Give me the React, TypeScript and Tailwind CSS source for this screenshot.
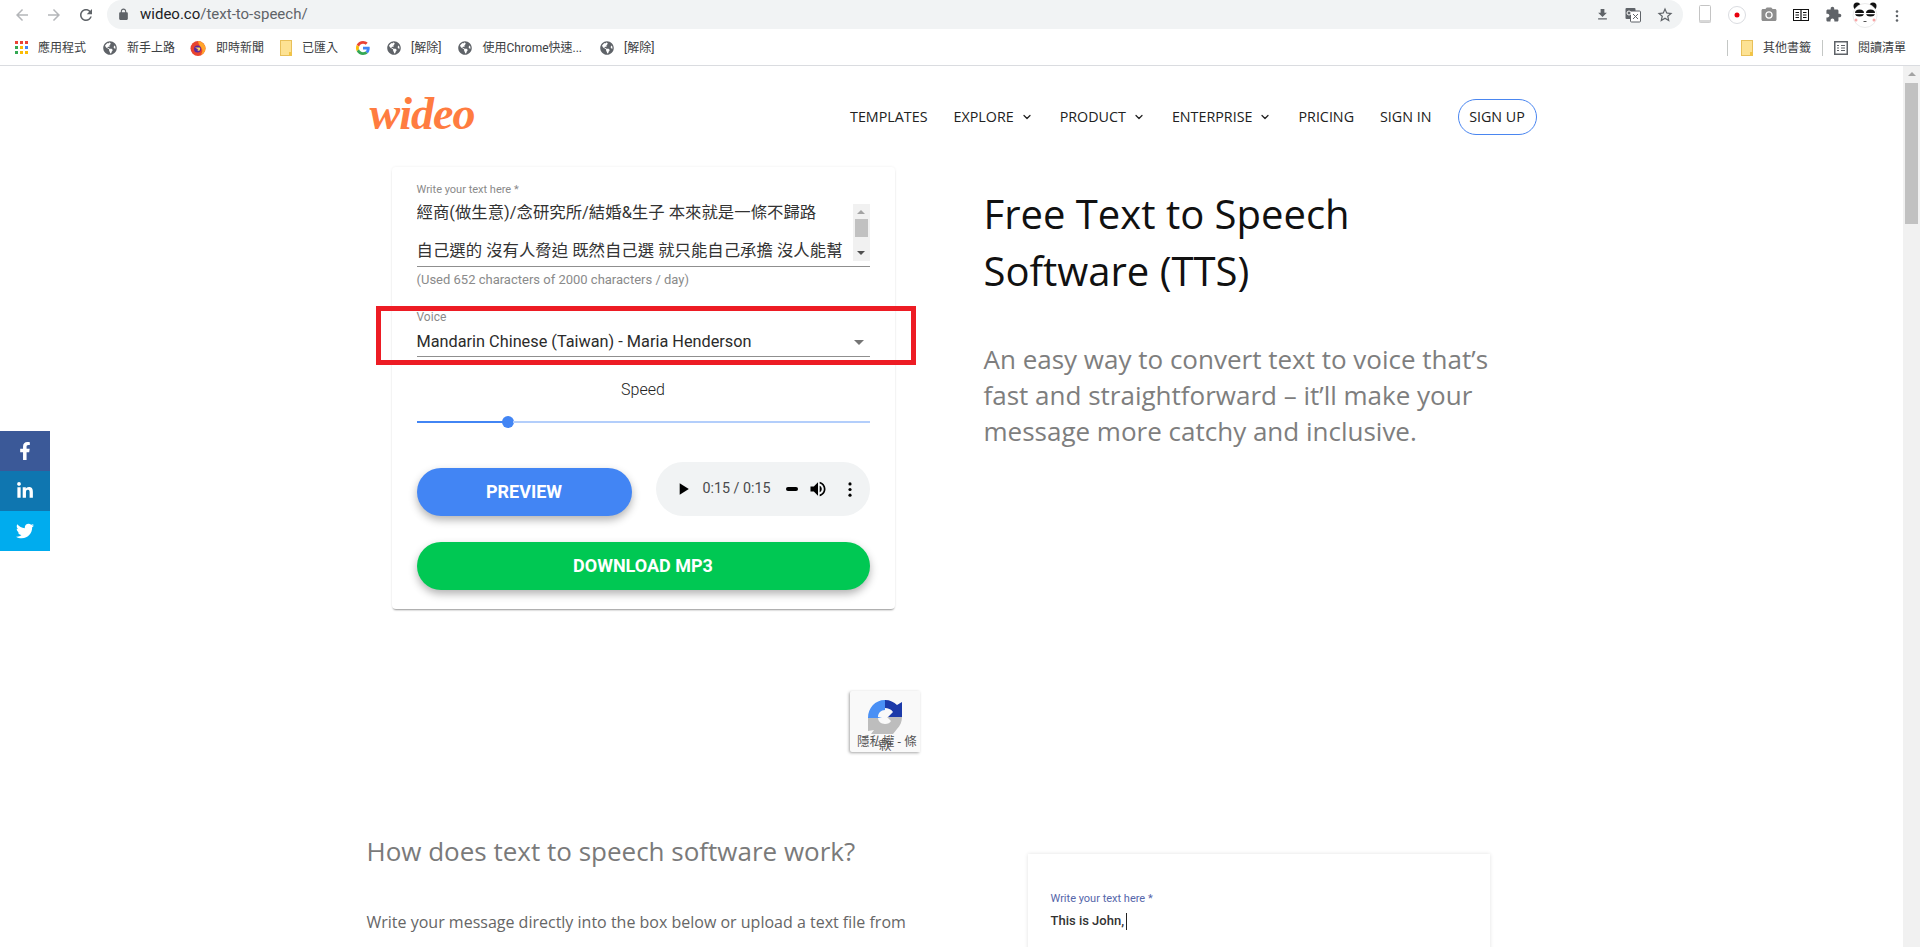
import { ChevronDown } from "lucide-react";
import { FaFacebookF, FaGlobeAmericas, FaLinkedinIn, FaTwitter } from "react-icons/fa";

const cjk = "font-['Roboto','Noto_Sans_CJK_TC',sans-serif]";

function Mi({ d, className }: { d: string; className?: string }) {
  return (
    <svg viewBox="0 0 24 24" className={className} fill="currentColor">
      <path d={d} />
    </svg>
  );
}

const icons = {
  back: "M20 11H7.83l5.59-5.59L12 4l-8 8 8 8 1.41-1.41L7.83 13H20v-2z",
  forward: "M12 4l-1.41 1.41L16.17 11H4v2h12.17l-5.58 5.59L12 20l8-8z",
  reload:
    "M17.65 6.35C16.2 4.9 14.21 4 12 4c-4.42 0-7.99 3.58-7.99 8s3.57 8 7.99 8c3.73 0 6.84-2.55 7.73-6h-2.08c-.82 2.33-3.04 4-5.65 4-3.31 0-6-2.69-6-6s2.69-6 6-6c1.66 0 3.14.69 4.22 1.78L13 11h7V4l-2.35 2.35z",
  lock: "M18 8h-1V6c0-2.76-2.24-5-5-5S7 3.24 7 6v2H6c-1.1 0-2 .9-2 2v10c0 1.1.9 2 2 2h12c1.1 0 2-.9 2-2V10c0-1.1-.9-2-2-2zM9 6c0-1.66 1.34-3 3-3s3 1.34 3 3v2H9V6z",
  download: "M19 9h-4V3H9v6H5l7 7 7-7zM5 18v2h14v-2H5z",
  star: "M22 9.24l-7.19-.62L12 2 9.19 8.63 2 9.24l5.46 4.73L5.82 21 12 17.27 18.18 21l-1.63-7.03L22 9.24zM12 15.4l-3.76 2.27 1-4.28-3.32-2.88 4.38-.38L12 6.1l1.71 4.04 4.38.38-3.32 2.88 1 4.28L12 15.4z",
  camera:
    "M9 2L7.17 4H4c-1.1 0-2 .9-2 2v12c0 1.1.9 2 2 2h16c1.1 0 2-.9 2-2V6c0-1.1-.9-2-2-2h-3.17L15 2H9zm3 15c-2.76 0-5-2.24-5-5s2.24-5 5-5 5 2.24 5 5-2.24 5-5 5zm0-8.2a3.2 3.2 0 1 0 0 6.4 3.2 3.2 0 0 0 0-6.4z",
  puzzle:
    "M20.5 11H19V7c0-1.1-.9-2-2-2h-4V3.5C13 2.12 11.88 1 10.5 1S8 2.12 8 3.5V5H4c-1.1 0-1.99.9-1.99 2v3.8H3.5c1.49 0 2.7 1.21 2.7 2.7s-1.21 2.7-2.7 2.7H2V20c0 1.1.9 2 2 2h3.8v-1.5c0-1.49 1.21-2.7 2.7-2.7 1.49 0 2.7 1.21 2.7 2.7V22H17c1.1 0 2-.9 2-2v-4h1.5c1.38 0 2.5-1.12 2.5-2.5S21.88 11 20.5 11z",
  play: "M8 5v14l11-7z",
  volume: "M3 9v6h4l5 5V4L7 9H3zm13.5 3c0-1.77-1.02-3.29-2.5-4.03v8.05c1.48-.73 2.5-2.25 2.5-4.02zM14 3.23v2.06c2.89.86 5 3.54 5 6.71s-2.11 5.85-5 6.71v2.06c4.01-.91 7-4.49 7-8.77s-2.99-7.86-7-8.77z",
};

function Dots({ className }: { className?: string }) {
  return (
    <svg viewBox="0 0 4 16" className={className} fill="currentColor">
      <circle cx="2" cy="2" r="1.7" />
      <circle cx="2" cy="8" r="1.7" />
      <circle cx="2" cy="14" r="1.7" />
    </svg>
  );
}

function AppsIcon() {
  const colors = ["#ea4335", "#ea4335", "#ea4335", "#34a853", "#fbbc05", "#4285f4", "#34a853", "#fbbc05", "#fbbc05"];
  return (
    <svg viewBox="0 0 13 13" className="h-[13px] w-[13px]">
      {colors.map((c, i) => (
        <rect key={i} x={(i % 3) * 5} y={Math.floor(i / 3) * 5} width="3" height="3" fill={c} />
      ))}
    </svg>
  );
}

function Folder() {
  return (
    <svg viewBox="0 0 12 16" className="h-[16px] w-[12px]">
      <rect x="0.5" y="0.5" width="11" height="15" fill="#fde293" stroke="#e8c05a" />
      <rect x="9" y="12" width="2.5" height="3.5" fill="#f4c542" />
    </svg>
  );
}

function Globe() {
  return <FaGlobeAmericas className="h-[14px] w-[14px] text-[#5f6368]" />;
}

function Firefox() {
  return (
    <svg viewBox="0 0 16 16" className="h-[16px] w-[16px]">
      <circle cx="8" cy="8.5" r="7.5" fill="#e8432e" />
      <path d="M8 1c4 .5 7.5 3.5 7.5 7.5 0 3-2 5.5-5 6.5 2-2 2.5-5 1-7C10.500 6 8.500 5 8 1z" fill="#ffa52c" />
      <circle cx="7.500" cy="9" r="3.500" fill="#5b2a9d" />
      <path d="M5 7.500h4.500c1 .5 1 2.500-.5 3.500l-2-1 1.500-.5-3.500-2z" fill="#ffd567" />
    </svg>
  );
}

function GoogleG() {
  return (
    <svg viewBox="0 0 48 48" className="h-[14px] w-[14px]">
      <path fill="#EA4335" d="M24 9.5c3.54 0 6.71 1.22 9.21 3.6l6.85-6.85C35.9 2.38 30.47 0 24 0 14.62 0 6.51 5.38 2.56 13.22l7.98 6.19C12.43 13.72 17.74 9.5 24 9.5z" />
      <path fill="#4285F4" d="M46.98 24.55c0-1.57-.15-3.09-.38-4.55H24v9.02h12.94c-.58 2.96-2.26 5.48-4.78 7.18l7.73 6c4.51-4.18 7.09-10.36 7.09-17.65z" />
      <path fill="#FBBC05" d="M10.53 28.59c-.48-1.45-.76-2.99-.76-4.59s.27-3.14.76-4.59l-7.98-6.19C.92 16.46 0 20.12 0 24c0 3.88.92 7.54 2.56 10.78l7.97-6.19z" />
      <path fill="#34A853" d="M24 48c6.48 0 11.93-2.13 15.89-5.81l-7.73-6c-2.15 1.45-4.92 2.3-8.16 2.3-6.26 0-11.57-4.22-13.47-9.91l-7.98 6.19C6.51 42.62 14.62 48 24 48z" />
    </svg>
  );
}

function Panda() {
  return (
    <svg viewBox="0 0 28 28" className="h-[28px] w-[28px]">
      <circle cx="6" cy="5" r="3.500" fill="#111" />
      <circle cx="22" cy="5" r="3.500" fill="#111" />
      <circle cx="14" cy="14.500" r="12" fill="#fff" stroke="#ddd" strokeWidth="0.6" />
      <ellipse cx="8.500" cy="12" rx="4.500" ry="3.500" fill="#111" />
      <ellipse cx="19.500" cy="12" rx="4.500" ry="3.500" fill="#111" />
      <rect x="4" y="12" width="20" height="1.200" fill="#fff" />
      <circle cx="5" cy="19" r="1.500" fill="#f6a6a6" />
      <circle cx="23" cy="19" r="1.500" fill="#f6a6a6" />
      <rect x="12.500" y="20" width="3" height="1" fill="#555" />
    </svg>
  );
}

function Toolbar() {
  return (
    <div className="flex h-[35px] items-start bg-white text-[#5f6368]">
      <Mi d={icons.back} className="ml-[13px] mt-[6px] h-[18px] w-[18px] text-[#b4b6b9]" />
      <Mi d={icons.forward} className="ml-[14px] mt-[6px] h-[18px] w-[18px] text-[#b4b6b9]" />
      <Mi d={icons.reload} className="ml-[14px] mt-[6px] h-[18px] w-[18px]" />
      <div className="ml-[12px] flex h-[29px] w-[1576px] items-center rounded-r-full rounded-l-full bg-[#f1f3f4]">
        <Mi d={icons.lock} className="ml-[10px] h-[13px] w-[13px]" />
        <span className="ml-[10px] font-['Roboto',sans-serif] text-[15px] text-[#202124]">
          wideo.co<span className="text-[#5f6368]">/text-to-speech/</span>
        </span>
        <Mi d={icons.download} className="ml-auto h-[15px] w-[15px]" />
        <svg viewBox="0 0 16 16" className="ml-[15px] h-[16px] w-[16px]">
          <rect x="0.5" y="1" width="10" height="11" rx="1" fill="#5f6368" />
          <rect x="5.500" y="4" width="10" height="11" rx="1" fill="#fff" stroke="#5f6368" />
          <path d="M8 7l5 5M13 7l-5 5" stroke="#5f6368" strokeWidth="1" />
          <circle cx="4" cy="6" r="2" fill="none" stroke="#fff" />
        </svg>
        <Mi d={icons.star} className="ml-[15px] mr-[9px] h-[18px] w-[18px]" />
      </div>
      <svg viewBox="0 0 12 18" className="ml-[16px] mt-[5px] h-[18px] w-[12px]">
        <rect x="0.5" y="0.5" width="11" height="17" rx="1" fill="#fff" stroke="#c4c4c4" />
        <rect x="0.5" y="15" width="11" height="2.500" fill="#d8d8d8" />
      </svg>
      <svg viewBox="0 0 18 18" className="ml-[17px] mt-[6px] h-[18px] w-[18px]">
        <circle cx="9" cy="9" r="8.500" fill="#fff" stroke="#dadce0" />
        <circle cx="9" cy="9" r="2.500" fill="#e8000d" />
      </svg>
      <Mi d={icons.camera} className="ml-[14px] mt-[6px] h-[18px] w-[18px] text-[#8e8e8e]" />
      <svg viewBox="0 0 16 12" className="ml-[15px] mt-[9px] h-[12px] w-[16px]">
        <rect x="0.500" y="0.500" width="15" height="11" fill="#fff" stroke="#111" />
        <path d="M8 0v12M2.500 3.500h3.500M2.500 6h3.500M2.500 8.500h3.500M10 3.500h3.500M10 6h3.500M10 8.500h3.500" stroke="#111" strokeWidth="1.200" />
      </svg>
      <Mi d={icons.puzzle} className="ml-[16px] mt-[6px] h-[17px] w-[17px]" />
      <div className="ml-[9px] mt-[1px]">
        <Panda />
      </div>
      <Dots className="ml-[16px] mt-[10px] h-[12px] w-[4px]" />
    </div>
  );
}

function Mark({ icon, label, className }: { icon: React.ReactNode; label: string; className: string }) {
  return (
    <div className={`flex items-center ${className}`}>
      {icon}
      <span className="ml-[10px] whitespace-nowrap">{label}</span>
    </div>
  );
}

function Bookmarks() {
  return (
    <div className={`flex h-[31px] items-center border-b border-[#dadce0] bg-white pb-[5px] text-[12px] text-[#3c4043] ${cjk}`}>
      <Mark icon={<AppsIcon />} label="應用程式" className="ml-[15px]" />
      <Mark icon={<Globe />} label="新手上路" className="ml-[17px]" />
      <Mark icon={<Firefox />} label="即時新聞" className="ml-[15px]" />
      <Mark icon={<Folder />} label="已匯入" className="ml-[16px]" />
      <div className="ml-[18px]">
        <GoogleG />
      </div>
      <Mark icon={<Globe />} label="[解除]" className="ml-[17px]" />
      <Mark icon={<Globe />} label="使用Chrome快速..." className="ml-[17px]" />
      <Mark icon={<Globe />} label="[解除]" className="ml-[18px]" />
      <div className="ml-auto h-[16px] w-px bg-[#c4c7c5]" />
      <Mark icon={<Folder />} label="其他書籤" className="ml-[13px]" />
      <div className="ml-[11px] h-[16px] w-px bg-[#c4c7c5]" />
      <svg viewBox="0 0 14 14" className="ml-[11px] h-[14px] w-[14px]">
        <rect x="0.750" y="0.750" width="12.500" height="12.500" fill="none" stroke="#5f6368" strokeWidth="1.500" />
        <path d="M3 4.500h2M7 4.500h4M3 7h2M7 7h4M3 9.500h2M7 9.500h4" stroke="#5f6368" />
      </svg>
      <span className="ml-[10px] mr-[14px]">閱讀清單</span>
    </div>
  );
}

function NavItem({ label, menu }: { label: string; menu?: boolean }) {
  return (
    <span className="flex items-center">
      {label}
      {menu && <ChevronDown className="ml-[7px] mr-[1px] h-[12px] w-[12px]" strokeWidth={2.5} />}
    </span>
  );
}

function Header() {
  return (
    <header className="flex h-[101px] items-center justify-between">
      <span className="ml-[3px] -mt-[6px] font-['Liberation_Serif',serif] text-[46px] font-bold italic tracking-[-1px] text-[#ff7c40]">
        wideo
      </span>
      <nav className="flex items-center gap-[26px] font-['Open_Sans',sans-serif] text-[14.300px] text-[#212121]">
        <NavItem label="TEMPLATES" />
        <NavItem label="EXPLORE" menu />
        <NavItem label="PRODUCT" menu />
        <NavItem label="ENTERPRISE" menu />
        <NavItem label="PRICING" />
        <NavItem label="SIGN IN" />
        <span className="flex h-[36px] w-[79px] items-center justify-center rounded-[18px] border border-[#4a86f0]">SIGN UP</span>
      </nav>
    </header>
  );
}

function AudioPlayer() {
  return (
    <div className="flex h-[54px] w-[214px] items-center rounded-full bg-[#f1f3f4] text-black">
      <Mi d={icons.play} className="ml-[17px] h-[20px] w-[20px]" />
      <span className="ml-[10px] whitespace-nowrap font-['Roboto',sans-serif] text-[14.300px] text-[#4a4b4d]">0:15 / 0:15</span>
      <span className="ml-[15px] h-[4px] w-[12px] rounded-full bg-black" />
      <Mi d={icons.volume} className="ml-[10px] h-[20px] w-[20px]" />
      <Dots className="ml-[20px] h-[15px] w-[4px]" />
    </div>
  );
}

function TtsCard() {
  return (
    <div className={`ml-[25px] h-[442px] w-[503px] rounded-[4px] bg-white px-[25px] pt-[16px] shadow-[0_2px_2px_-1px_rgba(0,0,0,0.4),0_0_3px_rgba(0,0,0,0.07)] ${cjk}`}>
      <div className="h-[14px] text-[11px] leading-[14px] text-[#8a8a8a]">Write your text here *</div>
      <div className="flex h-[70px] overflow-hidden border-b border-[#8f8f8f]">
        <div className="-mt-[3px] flex-1 whitespace-nowrap text-[16.400px] leading-[38px] text-[#333]">
          <div>經商(做生意)/念研究所/結婚&amp;生子 本來就是一條不歸路</div>
          <div>自己選的 沒有人脅迫 既然自己選 就只能自己承擔 沒人能幫</div>
        </div>
        <div className="mt-[7px] flex h-[57px] w-[17px] flex-col items-center bg-[#f1f1f1]">
          <span className="mt-[6px] h-0 w-0 border-x-[4px] border-b-[4px] border-x-transparent border-b-[#a3a3a3]" />
          <span className="mt-[5px] h-[18px] w-[13px] bg-[#c1c1c1]" />
          <span className="mt-[14px] h-0 w-0 border-x-[4px] border-t-[4px] border-x-transparent border-t-[#505050]" />
        </div>
      </div>
      <div className="mt-[5px] h-[16px] text-[13px] leading-[16px] text-[#8a8a8a]">(Used 652 characters of 2000 characters / day)</div>
      <div className="mt-[22px] h-[14px] text-[12px] leading-[14px] text-[#8a8a8a]">Voice</div>
      <div className="flex h-[33px] items-center justify-between border-b border-[#8f8f8f] pr-[6px] pt-[4px] text-[16.300px] text-[#2b2b2b]">
        <span>Mandarin Chinese (Taiwan) - Maria Henderson</span>
        <span className="h-0 w-0 border-x-[5px] border-t-[5px] border-x-transparent border-t-[#757575]" />
      </div>
      <div className="mt-[21px] h-[24px] text-center text-[16px] leading-[24px] font-light text-[#222]">Speed</div>
      <div className="mt-[13px] flex h-[14px] items-center">
        <span className="h-[2px] w-[86px] bg-[#4285f4]" />
        <span className="-mx-[1px] h-[12px] w-[12px] rounded-full bg-[#4285f4]" />
        <span className="h-[2px] flex-1 bg-[#b3cefb]" />
      </div>
      <div className="mt-[33px] flex items-end justify-between">
        <div className="flex h-[48px] w-[215px] items-center justify-center rounded-full bg-[#4285f4] pb-[1px] text-[18px] font-bold text-white shadow-[0_4px_8px_rgba(0,0,0,0.3)]">
          PREVIEW
        </div>
        <AudioPlayer />
      </div>
      <div className="mt-[26px] flex h-[48px] items-center justify-center rounded-full bg-[#00c853] pb-[2px] text-[18px] font-bold text-white shadow-[0_4px_8px_rgba(0,0,0,0.3)]">
        DOWNLOAD MP3
      </div>
    </div>
  );
}

function Hero() {
  return (
    <section className="flex items-start">
      <TtsCard />
      <div className="ml-[89px] mt-[18px] font-['Open_Sans',sans-serif]">
        <h1 className="text-[40px] leading-[57px] text-[#111]">
          Free Text to Speech
          <br />
          Software (TTS)
        </h1>
        <p className="mt-[42px] text-[26px] leading-[36px] text-[#7e7e7e]">
          An easy way to convert text to voice that’s
          <br />
          fast and straightforward – it’ll make your
          <br />
          message more catchy and inclusive.
        </p>
      </div>
    </section>
  );
}

function HowItWorks() {
  return (
    <section className="mt-[224px] flex items-start font-['Open_Sans',sans-serif]">
      <div className="w-[661px]">
        <h2 className="text-[26px] leading-[36px] text-[#7a7a7a]">How does text to speech software work?</h2>
        <p className="mt-[34px] whitespace-nowrap text-[16px] leading-[38px] text-[#666]">
          Write your message directly into the box below or upload a text file from
          <br />
          your computer, choose the voice you like, start with the speed and that’s
        </p>
      </div>
      <div className="mt-[21px] h-[300px] w-[462px] bg-white pl-[23px] pt-[38px] font-['Roboto',sans-serif] shadow-[0_0_4px_rgba(0,0,0,0.12)]">
        <div className="text-[11px] leading-[14px] text-[#5566aa]">Write your text here *</div>
        <div className="mt-[5px] flex items-center text-[13px] leading-[20px] font-medium text-[#333]">
          This is John,
          <span className="ml-[2px] h-[17px] w-px bg-[#222]" />
        </div>
      </div>
    </section>
  );
}

function ShareBar() {
  return (
    <div className="absolute left-0 top-[431px] flex w-[50px] flex-col text-white">
      <div className="flex h-[40px] items-center justify-center bg-[#3b5998]">
        <FaFacebookF className="h-[18px] w-[18px]" />
      </div>
      <div className="flex h-[40px] items-center justify-center bg-[#0f76b0]">
        <FaLinkedinIn className="h-[18px] w-[18px]" />
      </div>
      <div className="flex h-[40px] items-center justify-center bg-[#00acee]">
        <FaTwitter className="h-[18px] w-[18px]" />
      </div>
    </div>
  );
}

function RecaptchaBadge() {
  return (
    <div className={`absolute left-[850px] top-[691px] h-[61px] w-[70px] overflow-hidden rounded-l-[2px] bg-[#f9f9f9] shadow-[-1px_1px_3px_rgba(0,0,0,0.35)] ${cjk}`}>
      <svg viewBox="0 0 40 40" className="absolute left-[15px] top-[6px] h-[40px] w-[40px]">
        <path d="M3 21C3 11 10 3 20 3v10c-4 0-7 3-7 7l4 1H3z" fill="#4a90f5" />
        <path d="M20 3c5 0 9 2 12 5l5-3v15H23l5-5c-2-3-5-4-8-4V3z" fill="#1c3aa9" />
        <path d="M3 21h10c0 3 3 6 7 6 3 0 5-1 6-3l-4-4h15c0 5-2 9-5 12l-4 5H6l3-4-6 1V21z" fill="#bdbdbd" />
      </svg>
      <div className="absolute left-[7px] top-[44px] whitespace-nowrap text-[12.500px] leading-[13px] text-[#555]">隱私權 - 條</div>
      <div className="absolute left-[29px] top-[49px] text-[12.500px] leading-[12px] text-[#555]">款</div>
    </div>
  );
}

export default function App() {
  return (
    <div className="relative flex h-[947px] w-[1920px] flex-col overflow-hidden bg-white">
      <Toolbar />
      <Bookmarks />
      <div className="flex min-h-0 flex-1">
        <main className="min-w-0 flex-1 overflow-hidden">
          <div className="mx-auto w-[1170px]">
            <Header />
            <Hero />
            <HowItWorks />
          </div>
        </main>
        <div className="flex w-[17px] flex-col items-center bg-[#f1f1f1]">
          <span className="mt-[6px] h-0 w-0 border-x-[4px] border-b-[4px] border-x-transparent border-b-[#a3a3a3]" />
          <span className="mt-[7px] h-[141px] w-[13px] bg-[#c1c1c1]" />
        </div>
      </div>
      <ShareBar />
      <RecaptchaBadge />
      <div className="absolute left-[376px] top-[306px] h-[59px] w-[540px] border-[5px] border-[#ed1c24]" />
    </div>
  );
}
